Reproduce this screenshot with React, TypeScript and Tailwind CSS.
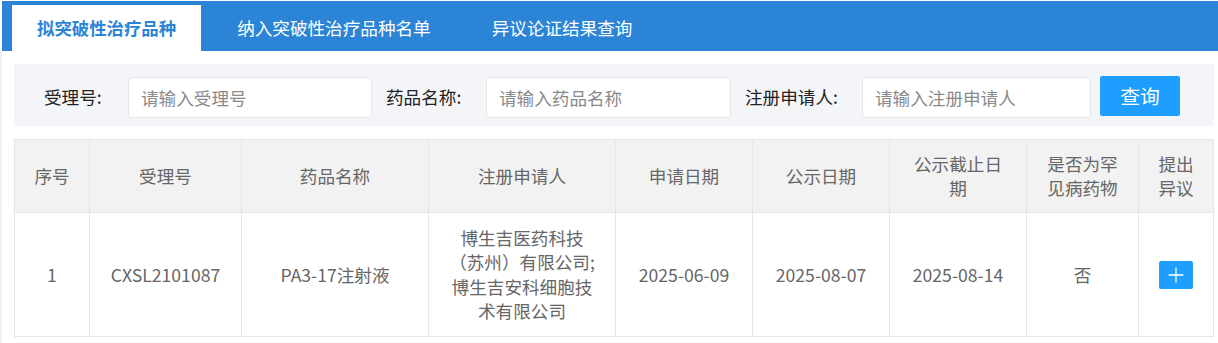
import { Plus } from "lucide-react";

const tabs = ["拟突破性治疗品种", "纳入突破性治疗品种名单", "异议论证结果查询"];

const columns = [
  { title: "序号", width: 75 },
  { title: "受理号", width: 152 },
  { title: "药品名称", width: 187 },
  { title: "注册申请人", width: 187 },
  { title: "申请日期", width: 137 },
  { title: "公示日期", width: 137 },
  { title: "公示截止日期", width: 137 },
  { title: "是否为罕见病药物", width: 112 },
  { title: "提出异议", width: 75 },
];

const rows = [
  {
    no: "1",
    code: "CXSL2101087",
    name: "PA3-17注射液",
    applicant: "博生吉医药科技（苏州）有限公司;博生吉安科细胞技术有限公司",
    applyDate: "2025-06-09",
    publicDate: "2025-08-07",
    endDate: "2025-08-14",
    rare: "否",
  },
];

const FilterField = ({ label, placeholder, labelW, inputW }: { label: string; placeholder: string; labelW: string; inputW: string }) => (
  <div className="flex items-center mt-[1px]">
    <span className={`${labelW} text-[#222] shrink-0`}>{label}</span>
    <input
      placeholder={placeholder}
      className={`${inputW} h-[41px] bg-white border border-[#e6e6e6] rounded-[4px] px-3 text-[17.6px] placeholder:text-[#8a8a8a] outline-none`}
    />
  </div>
);

export default function App() {
  return (
    <div
      className="w-[1218px] h-[343px] bg-white overflow-hidden text-[17.6px]"
      style={{ fontFamily: '"Noto Sans CJK SC", "Noto Sans", sans-serif' }}
    >
      {/* tab bar */}
      <div className="ml-[2px] mt-[1px] h-[50px] bg-[#2b84d6] flex items-end pl-[10px] gap-[11px]">
        {tabs.map((t, i) =>
          i === 0 ? (
            <div key={t} className="h-[46px] px-[25px] bg-white text-[#2b84d6] font-bold text-[17.4px] flex items-center">
              {t}
            </div>
          ) : (
            <div key={t} className="h-[46px] px-[25px] text-white text-[17.6px] flex items-center">
              {t}
            </div>
          )
        )}
      </div>

      <div className="border-l-2 border-[#eef1f6] pl-[12px] pt-[13px] h-[292px]">
        {/* filter bar */}
        <div className="w-[1200px] h-[62px] bg-[#f4f5f8] flex items-start pt-[12px] pl-[30px]">
          <FilterField label="受理号:" placeholder="请输入受理号" labelW="w-[84px]" inputW="w-[244px]" />
          <div className="w-[14px]" />
          <FilterField label="药品名称:" placeholder="请输入药品名称" labelW="w-[100px]" inputW="w-[245px]" />
          <div className="w-[14px]" />
          <FilterField label="注册申请人:" placeholder="请输入注册申请人" labelW="w-[117px]" inputW="w-[229px]" />
          <button className="ml-[9px] w-[80px] h-[40px] bg-[#1e9fff] text-white text-[19.8px] rounded-[2px]">
            查询
          </button>
        </div>

        {/* table */}
        <table className="mt-[13px] w-[1199px] table-fixed border-collapse text-[#666] text-center leading-[24px]">
          <colgroup>
            {columns.map((c) => (
              <col key={c.title} style={{ width: c.width }} />
            ))}
          </colgroup>
          <thead>
            <tr className="bg-[#f2f2f2] h-[73px]">
              {columns.map((c) => (
                <th key={c.title} className="border border-[#e6e6e6] px-[16px] font-normal">
                  {c.title}
                </th>
              ))}
            </tr>
          </thead>
          <tbody>
            {rows.map((r) => (
              <tr key={r.no} className="h-[124px]">
                <td className="border border-[#e6e6e6] px-[16px]">{r.no}</td>
                <td className="border border-[#e6e6e6] px-[10px]">{r.code}</td>
                <td className="border border-[#e6e6e6] px-[16px]">{r.name}</td>
                <td className="border border-[#e6e6e6] px-[16px] leading-[24.5px]">{r.applicant}</td>
                <td className="border border-[#e6e6e6] px-[16px]">{r.applyDate}</td>
                <td className="border border-[#e6e6e6] px-[16px]">{r.publicDate}</td>
                <td className="border border-[#e6e6e6] px-[16px]">{r.endDate}</td>
                <td className="border border-[#e6e6e6] px-[16px]">{r.rare}</td>
                <td className="border border-[#e6e6e6]">
                  <div className="flex justify-center">
                    <button className="w-[34px] h-[28px] bg-[#1e9fff] rounded-[2px] flex items-center justify-center">
                      <Plus size={24} strokeWidth={1.3} className="text-white" />
                    </button>
                  </div>
                </td>
              </tr>
            ))}
          </tbody>
        </table>
      </div>
    </div>
  );
}
